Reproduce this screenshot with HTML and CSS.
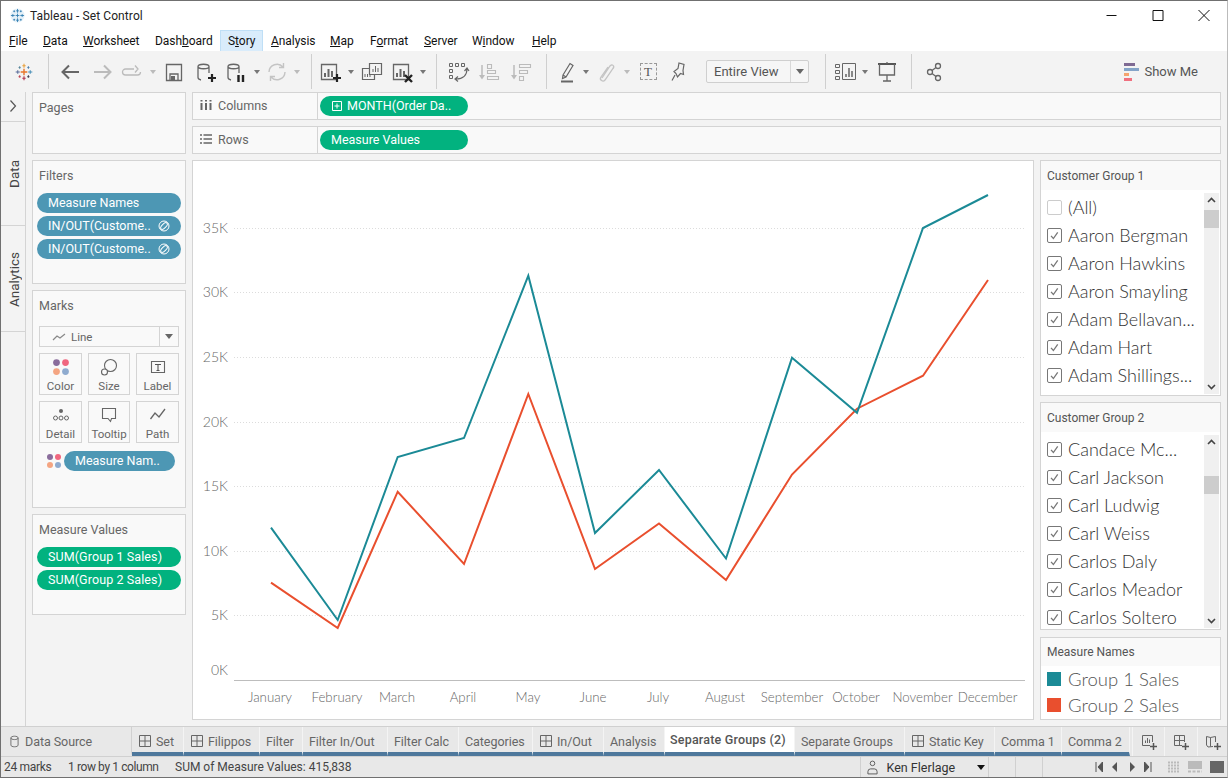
FILE: index.html
```
<!DOCTYPE html>
<html lang="en">
<head>
<meta charset="utf-8">
<title>Tableau - Set Control</title>
<link rel="stylesheet" href="styles.css">
</head>
<body>
<svg class="defs" xmlns="http://www.w3.org/2000/svg">
  <symbol id="sheet" viewBox="0 0 12 12"><path d="M.5.5h11v11H.5zM6 .5v11M.5 6h11" fill="none" stroke="#666"/></symbol>
  <symbol id="check" viewBox="0 0 15 15"><path d="M3.5 8l2.7 3 5-7" fill="none" stroke="#777" stroke-width="1.5"/></symbol>
  <symbol id="setic" viewBox="0 0 12 12"><circle cx="6" cy="6" r="5" fill="none" stroke="#fff"/><ellipse cx="6" cy="6" rx="4.2" ry="2" transform="rotate(-45 6 6)" fill="none" stroke="#fff"/></symbol>
  <symbol id="up" viewBox="0 0 15 15"><path d="M4 9l3.5-3.5L11 9" fill="none" stroke="#444" stroke-width="1.6"/></symbol>
  <symbol id="down" viewBox="0 0 15 15"><path d="M4 6l3.5 3.5L11 6" fill="none" stroke="#444" stroke-width="1.6"/></symbol>
  <symbol id="dots" viewBox="0 0 16 16"><circle cx="4" cy="4" r="3" fill="#8a6d9c"/><circle cx="12" cy="4" r="3" fill="#f0677f"/><circle cx="4" cy="12" r="3" fill="#f4a582"/><circle cx="12" cy="12" r="3" fill="#8fabcf"/></symbol>
  <symbol id="cyl" viewBox="0 0 24 24"><path d="M4 6.500c0-3 11-3 11 0s-11 3-11 0v11c0 1 1 2 3 2.500M15 6.500V13" fill="none" stroke="#666" stroke-width="1.300"/></symbol>
  <symbol id="bars" viewBox="0 0 24 24"><path d="M3.500 4.500h15v15h-15z" fill="none" stroke="#666" stroke-width="1.300"/><path d="M7 17v-4M10.500 17V9M14 17v-6" stroke="#666" stroke-width="2"/></symbol>
</svg>

<div class="window">
  <header class="titlebar">
    <svg class="title-logo" viewBox="0 0 16 16"><circle cx="8" cy="8" r="7.500" fill="#e4f0f8"/><path d="M8 1v4M6.500 3h3M8 6v4M6 8h4M8 11v4M6.500 13h3M1 8h4M3 6.500v3M11 8h4M13 6.500v3M3.500 3.500h2M4.500 2.500v2M10.500 3.500h2M11.500 2.500v2M3.500 12.500h2M4.500 11.500v2M10.500 12.500h2M11.500 11.500v2" stroke="#2d7bb0" stroke-width=".9" fill="none"/></svg>
    <span class="title-text">Tableau - Set Control</span>
    <div class="winctl">
      <svg class="win-ic" viewBox="0 0 44 12"><path d="M17 6.500h10" stroke="#111"/></svg>
      <svg class="win-ic" viewBox="0 0 44 12"><path d="M17.500 1.500h10v10h-10z" fill="none" stroke="#111"/></svg>
      <svg class="win-ic" viewBox="0 0 44 12"><path d="M17 1l11 11M28 1L17 12" fill="none" stroke="#111"/></svg>
    </div>
  </header>

  <nav class="menubar">
    <span class="menu-item"><u>F</u>ile</span>
    <span class="menu-item"><u>D</u>ata</span>
    <span class="menu-item"><u>W</u>orksheet</span>
    <span class="menu-item">Dash<u>b</u>oard</span>
    <span class="menu-item active">S<u>t</u>ory</span>
    <span class="menu-item"><u>A</u>nalysis</span>
    <span class="menu-item"><u>M</u>ap</span>
    <span class="menu-item">F<u>o</u>rmat</span>
    <span class="menu-item"><u>S</u>erver</span>
    <span class="menu-item">W<u>i</u>ndow</span>
    <span class="menu-item"><u>H</u>elp</span>
  </nav>

  <div class="toolbar">
    <span class="tb w48"><svg class="ic logo" viewBox="0 0 24 24" fill="none" stroke-width="1.300"><path d="M12 8v8M8 12h8" stroke="#e8762b" stroke-width="1.700"/><path d="M12 2v5M10 4.500h4" stroke="#e8a03b"/><path d="M12 17v5M10 19.500h4" stroke="#b0304a"/><path d="M2 12h5M4.500 10v4" stroke="#5b6f9c"/><path d="M17 12h5M19.500 10v4" stroke="#4a90b8"/><path d="M5.500 6.500h2.500M6.800 5v3" stroke="#59879b"/><path d="M16 6.500h2.500M17.300 5v3" stroke="#4d7fae"/><path d="M5.500 17.500h2.500M6.800 16v3" stroke="#c04a58"/><path d="M16 17.500h2.500M17.300 16v3" stroke="#445"/></svg></span>
    <span class="tb-div"></span>
    <span class="tb w42"><svg class="ic" viewBox="0 0 24 24"><path d="M21 12H5M11 5.500L4.500 12l6.500 6.500" fill="none" stroke="#666" stroke-width="2"/></svg></span>
    <span class="tb w24"><svg class="ic" viewBox="0 0 24 24"><path d="M3 12h16M13 5.500l6.500 6.500-6.500 6.500" fill="none" stroke="#bbb" stroke-width="2"/></svg></span>
    <span class="tb w34"><svg class="ic" viewBox="0 0 24 24"><path d="M14 9H5.500a3 3 0 0 0 0 6h12a3 3 0 0 0 3-3M15 5.500L18 9l-3 3.500" fill="none" stroke="#bbb" stroke-width="1.300"/></svg></span>
    <span class="tb w8"><i class="tri pale"></i></span>
    <span class="tb w34"><svg class="ic" viewBox="0 0 24 24"><path d="M4.500 4.500h15v16h-15z" fill="none" stroke="#666" stroke-width="1.300"/><path d="M8 20v-6h8v6" fill="none" stroke="#666" stroke-width="1.300"/><path d="M9 16h4v4H9z" fill="#666"/></svg></span>
    <span class="tb w30"><svg class="ic" viewBox="0 0 24 24"><use href="#cyl"/><path d="M18 14v8M14 18h8" stroke="#222" stroke-width="2.200"/></svg></span>
    <span class="tb w30"><svg class="ic" viewBox="0 0 24 24"><use href="#cyl"/><path d="M14.500 15v7M19 15v7" stroke="#222" stroke-width="2.400"/></svg></span>
    <span class="tb w12"><i class="tri"></i></span>
    <span class="tb w28"><svg class="ic" viewBox="0 0 24 24"><path d="M4 12a8 8 0 0 1 14-5M20 12a8 8 0 0 1-14 5M18.500 3v4.500H14M5.500 21v-4.500H10" fill="none" stroke="#c4c4c4" stroke-width="1.400"/></svg></span>
    <span class="tb w12"><i class="tri pale"></i></span>
    <span class="w8"></span>
    <span class="tb-div"></span>
    <span class="tb w35"><svg class="ic" viewBox="0 0 24 24"><use href="#bars"/><path d="M19 14v8M15 18h8" stroke="#222" stroke-width="2.200"/></svg></span>
    <span class="tb w8"><i class="tri"></i></span>
    <span class="tb w34"><svg class="ic" viewBox="0 0 24 24"><path d="M9.500 3.500h12v11h-12z" fill="none" stroke="#666" stroke-width="1.200"/><path d="M13 12V9M15.500 12V6M18 12V8" stroke="#666"/><path d="M9 8.500H2.500v11h12v-5" fill="none" stroke="#666" stroke-width="1.200"/><path d="M5 17v-3M7.500 17v-3M10 17v-2" stroke="#666"/></svg></span>
    <span class="tb w26"><svg class="ic" viewBox="0 0 24 24"><use href="#bars"/><path d="M15 15l7 7M22 15l-7 7" stroke="#222" stroke-width="2.400"/></svg></span>
    <span class="tb w16"><i class="tri"></i></span>
    <span class="w5"></span>
    <span class="tb-div"></span>
    <span class="tb w42"><svg class="ic" viewBox="0 0 24 24"><path d="M3.500 3.500h3v3h-3zM9.500 3.500h3v3h-3zM15.500 3.500h3v3h-3zM3.500 9.500h3v3h-3zM3.500 15.500h3v3h-3z" fill="none" stroke="#666"/><path d="M21 9c0 6-4 10-11 10M18.500 11l2.500-3 2 3M12 16.500L9 19l3 2.500" fill="none" stroke="#666" stroke-width="1.200"/></svg></span>
    <span class="tb w22"><svg class="ic" viewBox="0 0 24 24"><path d="M4 5v13" stroke="#bbb" stroke-width="1.500"/><path d="M1 15h6l-3 4.500z" fill="#bbb"/><path d="M9.500 4.500h4v4h-4zM9.500 10.500h8v3h-8zM9.500 16.500h11v3h-11z" fill="none" stroke="#bbb" stroke-width="1.100"/></svg></span>
    <span class="tb w42"><svg class="ic" viewBox="0 0 24 24"><path d="M4 5v13" stroke="#bbb" stroke-width="1.500"/><path d="M1 15h6l-3 4.500z" fill="#bbb"/><path d="M9.500 4.500h11v3h-11zM9.500 10.500h8v3h-8zM9.500 16.500h4v4h-4z" fill="none" stroke="#bbb" stroke-width="1.100"/></svg></span>
    <span class="w3"></span>
    <span class="tb-div"></span>
    <span class="w5"></span>
    <span class="tb w30"><svg class="ic" viewBox="0 0 24 24"><path d="M8 15L15 3.500l3 2L11 17l-3.500 1.500zM8 15l3 2" fill="none" stroke="#666" stroke-width="1.200"/><path d="M6 21.500h12" stroke="#666" stroke-width="2"/></svg></span>
    <span class="tb w8"><i class="tri"></i></span>
    <span class="tb w30"><svg class="ic" viewBox="0 0 24 24"><path d="M9 18l8-12c2-2.500 5 0 3 2.500L12 20c-2 2.500-6 0-4-3l7-10" fill="none" stroke="#c4c4c4" stroke-width="1.300"/></svg></span>
    <span class="tb w14"><i class="tri pale"></i></span>
    <span class="tb w28"><span class="tbox">T</span></span>
    <span class="tb w32"><svg class="ic" viewBox="0 0 24 24"><path d="M13 3l5 1.500-1 6 .5 4-3-1-3 3.500-1.500-3.500-2-2 4-3zM9 15l-3 5.500" fill="none" stroke="#666" stroke-width="1.200"/></svg></span>
    <span class="w12"></span>
    <span class="fit"><span class="fit-text">Entire View</span><span class="fit-arrow"><i class="tri dark"></i></span></span>
    <span class="w16"></span>
    <span class="tb-div"></span>
    <span class="w9"></span>
    <span class="tb w24"><svg class="ic" viewBox="0 0 24 24"><path d="M.5 4.500h4v3h-4zM.5 10.500h4v3h-4zM.5 16.500h4v3h-4zM7.500 3.500h13v16h-13z" fill="none" stroke="#666"/><path d="M11 17v-3M14 17V8M17 17v-6" stroke="#666" stroke-width="1.500"/></svg></span>
    <span class="w2"></span>
    <span class="tb w8"><i class="tri"></i></span>
    <span class="tb w36"><svg class="ic" viewBox="0 0 24 24"><path d="M3 4h18" stroke="#555" stroke-width="2"/><path d="M4.500 4v11h15V4M12 15v6M8 21h8M12 2v2" fill="none" stroke="#666" stroke-width="1.300"/></svg></span>
    <span class="w6"></span>
    <span class="tb-div"></span>
    <span class="tb w44"><svg class="ic" viewBox="0 0 24 24"><g fill="none" stroke="#666" stroke-width="1.300"><circle cx="8" cy="12" r="2.500"/><circle cx="16" cy="6" r="2.500"/><circle cx="16" cy="18" r="2.500"/><path d="M10 10.500l4-3M10 13.500l4 3"/></g></svg></span>
    <span class="showme">
      <svg class="sm-ic" viewBox="0 0 15 18"><path d="M0 0h11v3H0z" fill="#7f6a93"/><path d="M0 5h15v3H0z" fill="#84a4c8"/><path d="M0 10h5v3H0z" fill="#f4a46f"/><path d="M0 15h8v3H0z" fill="#f0707f"/></svg>
      Show Me
    </span>
  </div>

  <div class="workspace">
    <aside class="rail">
      <div class="rail-top"><svg class="rail-chev" viewBox="0 0 8 14"><path d="M1.500 1.500L6.500 7l-5 5.500" fill="none" stroke="#555" stroke-width="1.200"/></svg></div>
      <div class="rail-tab data"><span>Data</span></div>
      <div class="rail-tab analytics"><span>Analytics</span></div>
    </aside>

    <section class="cards">
      <div class="card pages"><div class="card-title">Pages</div></div>
      <div class="card filters">
        <div class="card-title">Filters</div>
        <div class="pills">
          <div class="pill blue">Measure Names</div>
          <div class="pill blue">IN/OUT(Custome..<svg class="set-ic"><use href="#setic"/></svg></div>
          <div class="pill blue">IN/OUT(Custome..<svg class="set-ic"><use href="#setic"/></svg></div>
        </div>
      </div>
      <div class="card marks">
        <div class="card-title">Marks</div>
        <div class="mark-select">
          <svg class="mark-line" viewBox="0 0 14 8"><path d="M1 7l4-4 3 2 5-4" fill="none" stroke="#888" stroke-width="1.200"/></svg>
          <span class="mark-type">Line</span>
          <span class="mark-arrow"><i class="tri dark"></i></span>
        </div>
        <div class="mark-grid">
          <div class="mark-btn"><svg class="mi dotsic"><use href="#dots"/></svg><span>Color</span></div>
          <div class="mark-btn"><svg class="mi" viewBox="0 0 18 18"><circle cx="10.500" cy="7.500" r="6" fill="none" stroke="#666" stroke-width="1.100"/><circle cx="4.500" cy="14" r="3" fill="#fafafa" stroke="#666" stroke-width="1.100"/></svg><span>Size</span></div>
          <div class="mark-btn"><svg class="mi" viewBox="0 0 18 18"><path d="M2.500 3.500h13v11h-13z" fill="none" stroke="#666" stroke-width="1.100"/><path d="M6 6.500h6M9 6.500v6M7.500 12.500h3" fill="none" stroke="#555" stroke-width="1.100"/></svg><span>Label</span></div>
          <div class="mark-btn"><svg class="mi" viewBox="0 0 18 18"><circle cx="9" cy="5" r="2" fill="#666"/><circle cx="3.500" cy="12" r="2" fill="none" stroke="#666"/><circle cx="9" cy="12" r="2" fill="none" stroke="#666"/><circle cx="14.500" cy="12" r="2" fill="none" stroke="#666"/></svg><span>Detail</span></div>
          <div class="mark-btn"><svg class="mi" viewBox="0 0 18 18"><path d="M2.500 2.500h13v10h-4l-1 3-2.500-3H2.500z" fill="none" stroke="#666" stroke-width="1.100"/></svg><span>Tooltip</span></div>
          <div class="mark-btn"><svg class="mi" viewBox="0 0 18 18"><path d="M1.500 13L6 7l4 4 6-8" fill="none" stroke="#666" stroke-width="1.300"/></svg><span>Path</span></div>
        </div>
        <div class="color-row">
          <svg class="dots-sm"><use href="#dots"/></svg>
          <div class="pill blue short">Measure Nam..</div>
        </div>
      </div>
      <div class="card values">
        <div class="card-title">Measure Values</div>
        <div class="pills">
          <div class="pill green">SUM(Group 1 Sales)</div>
          <div class="pill green">SUM(Group 2 Sales)</div>
        </div>
      </div>
    </section>

    <main class="main">
      <div class="shelf">
        <div class="shelf-label"><svg class="shelf-ic" viewBox="0 0 12 12"><path d="M1.500 4v7M6 4v7M10.500 4v7" stroke="#666" stroke-width="2"/><path d="M1.500 1v1.500M6 1v1.500M10.500 1v1.500" stroke="#666" stroke-width="2"/></svg>Columns</div>
        <div class="pill green shelf-pill"><svg class="plus-ic" viewBox="0 0 10 10"><path d="M.5.500h9v9h-9zM5 2.500v5M2.500 5h5" fill="none" stroke="#fff"/></svg>MONTH(Order Da..</div>
      </div>
      <div class="shelf">
        <div class="shelf-label"><svg class="shelf-ic" viewBox="0 0 12 12"><path d="M0 2h2M3.500 2H12M0 6h2M3.500 6H12M0 10h2M3.500 10H12" stroke="#666" stroke-width="1.600"/></svg>Rows</div>
        <div class="pill green shelf-pill plain">Measure Values</div>
      </div>
      <div class="view-row">
        <div class="chart">
          <svg class="chart-svg" viewBox="193 161 840 558">
            <g class="grid">
              <path d="M234 228.500H1025"/><path d="M234 292.500H1025"/><path d="M234 357.500H1025"/><path d="M234 422.500H1025"/><path d="M234 486.500H1025"/><path d="M234 551.500H1025"/><path d="M234 615.500H1025"/>
            </g>
            <path class="axis" d="M234 680.500H1025"/>
            <g class="ylab">
              <text x="228" y="233">35K</text><text x="228" y="297">30K</text><text x="228" y="362">25K</text><text x="228" y="427">20K</text><text x="228" y="491">15K</text><text x="228" y="556">10K</text><text x="228" y="620">5K</text><text x="228" y="675">0K</text>
            </g>
            <g class="xlab">
              <text x="270" y="702">January</text><text x="337" y="702">February</text><text x="397" y="702">March</text><text x="463" y="702">April</text><text x="528" y="702">May</text><text x="593" y="702">June</text><text x="658" y="702">July</text><text x="725" y="702">August</text><text x="792" y="702">September</text><text x="856" y="702">October</text><text x="922.500" y="702">November</text><text x="987.500" y="702">December</text>
            </g>
            <polyline class="l-red" points="271,582.700 337.700,628 397.700,491.700 464,564 528.300,394 595,569 659,523.500 726,580 792,474.500 857,408.700 923,375.700 988,280"/>
            <polyline class="l-teal" points="271,527.700 337.700,620 397.700,457 464,438 528.300,275.700 595,533 659,470 726,558.500 792,357.800 857,412.800 923,228 988,195"/>
          </svg>
        </div>
        <div class="side">
          <div class="qf qf1">
            <div class="qf-head">Customer Group 1</div>
            <div class="qf-body">
              <div class="qf-rows">
                <div class="qf-row"><span class="cb off"></span>(All)</div>
                <div class="qf-row"><span class="cb"><svg class="ck"><use href="#check"/></svg></span>Aaron Bergman</div>
                <div class="qf-row"><span class="cb"><svg class="ck"><use href="#check"/></svg></span>Aaron Hawkins</div>
                <div class="qf-row"><span class="cb"><svg class="ck"><use href="#check"/></svg></span>Aaron Smayling</div>
                <div class="qf-row"><span class="cb"><svg class="ck"><use href="#check"/></svg></span>Adam Bellavan...</div>
                <div class="qf-row"><span class="cb"><svg class="ck"><use href="#check"/></svg></span>Adam Hart</div>
                <div class="qf-row"><span class="cb"><svg class="ck"><use href="#check"/></svg></span>Adam Shillings...</div>
              </div>
              <div class="sb"><svg class="sb-ar"><use href="#up"/></svg><div class="thumb t1"></div><svg class="sb-ar end"><use href="#down"/></svg></div>
            </div>
          </div>
          <div class="qf qf2">
            <div class="qf-head">Customer Group 2</div>
            <div class="qf-body">
              <div class="qf-rows">
                <div class="qf-row"><span class="cb"><svg class="ck"><use href="#check"/></svg></span>Candace Mc...</div>
                <div class="qf-row"><span class="cb"><svg class="ck"><use href="#check"/></svg></span>Carl Jackson</div>
                <div class="qf-row"><span class="cb"><svg class="ck"><use href="#check"/></svg></span>Carl Ludwig</div>
                <div class="qf-row"><span class="cb"><svg class="ck"><use href="#check"/></svg></span>Carl Weiss</div>
                <div class="qf-row"><span class="cb"><svg class="ck"><use href="#check"/></svg></span>Carlos Daly</div>
                <div class="qf-row"><span class="cb"><svg class="ck"><use href="#check"/></svg></span>Carlos Meador</div>
                <div class="qf-row"><span class="cb"><svg class="ck"><use href="#check"/></svg></span>Carlos Soltero</div>
              </div>
              <div class="sb"><svg class="sb-ar"><use href="#up"/></svg><div class="thumb t2"></div><svg class="sb-ar end"><use href="#down"/></svg></div>
            </div>
          </div>
          <div class="qf qf3">
            <div class="qf-head">Measure Names</div>
            <div class="legend">
              <div class="legend-row"><span class="swatch teal"></span>Group 1 Sales</div>
              <div class="legend-row"><span class="swatch red"></span>Group 2 Sales</div>
            </div>
          </div>
        </div>
      </div>
    </main>
  </div>

  <div class="tabs">
    <div class="tab source"><svg class="tab-cyl" viewBox="0 0 10 14"><path d="M1 3c0-2.500 8-2.500 8 0s-8 2.500-8 0v8c0 2.500 8 2.500 8 0V3" fill="none" stroke="#666"/></svg>Data Source</div>
    <div class="tab sheet"><svg class="tab-ic"><use href="#sheet"/></svg>Set</div>
    <div class="tab sheet"><svg class="tab-ic"><use href="#sheet"/></svg>Filippos</div>
    <div class="tab">Filter</div>
    <div class="tab">Filter In/Out</div>
    <div class="tab">Filter Calc</div>
    <div class="tab">Categories</div>
    <div class="tab sheet"><svg class="tab-ic"><use href="#sheet"/></svg>In/Out</div>
    <div class="tab">Analysis</div>
    <div class="tab current">Separate Groups (2)</div>
    <div class="tab">Separate Groups</div>
    <div class="tab sheet"><svg class="tab-ic"><use href="#sheet"/></svg>Static Key</div>
    <div class="tab">Comma 1</div>
    <div class="tab">Comma 2</div>
    <div class="tab-gap"></div>
    <div class="tab-add"><svg class="add-ic" viewBox="0 0 16 16"><path d="M9 11.500H1.500v-10h10V8" fill="none" stroke="#666"/><path d="M4.500 9V6.500M6.500 9V4M8.500 9V5.500" stroke="#666"/><path d="M12.500 9v7M9 12.500h7" stroke="#555" stroke-width="1.500"/></svg></div>
    <div class="tab-add"><svg class="add-ic" viewBox="0 0 16 16"><path d="M9 11.500H1.500v-10h10V8M1.500 6.500h10M6.500 1.500v10" fill="none" stroke="#666"/><path d="M12.500 9v7M9 12.500h7" stroke="#555" stroke-width="1.500"/></svg></div>
    <div class="tab-add"><svg class="add-ic" viewBox="0 0 16 16"><path d="M8 12.500L3 13l-1.500-2V2.500l4 1 5-1V8M5.500 3.500v9" fill="none" stroke="#666"/><path d="M12.500 9v7M9 12.500h7" stroke="#555" stroke-width="1.500"/></svg></div>
  </div>

  <footer class="status">
    <span class="st-a">24 marks</span>
    <span class="st-b">1 row by 1 column</span>
    <span>SUM of Measure Values: 415,838</span>
    <div class="st-right">
      <div class="user"><svg class="user-ic" viewBox="0 0 12 16"><circle cx="6" cy="3.500" r="2.500" fill="none" stroke="#555"/><path d="M1 15v-2.500A3 3 0 0 1 4 9.500h4a3 3 0 0 1 3 3V15z" fill="none" stroke="#555"/></svg><span class="user-name">Ken Flerlage</span><i class="tri black"></i></div>
      <div class="st-cell"></div>
      <div class="st-cell"></div>
      <div class="st-nav">
        <svg class="nav-ic" viewBox="0 0 8 10"><path d="M1 0v10M7.500 0v10L3 5z" stroke="#555" fill="#555"/></svg>
        <svg class="nav-ic" viewBox="0 0 8 10"><path d="M6 0v10L1 5z" fill="#555"/></svg>
        <svg class="nav-ic" viewBox="0 0 8 10"><path d="M2 0v10l5-5z" fill="#555"/></svg>
        <svg class="nav-ic" viewBox="0 0 8 10"><path d="M7 0v10M.5 0v10L5 5z" stroke="#555" fill="#555"/></svg>
      </div>
      <div class="st-views">
        <svg class="view-ic" viewBox="0 0 12 12"><path d="M0 1.500h12M0 4.500h12M0 7.500h12M0 10.500h12" stroke="#bbb" stroke-width="2" stroke-dasharray="2 1"/></svg>
        <svg class="view-ic wide" viewBox="0 0 14 12"><path d="M0 0h14v8H0z" fill="#bbb"/><path d="M0 10.500h14" stroke="#bbb" stroke-width="2" stroke-dasharray="3 1.500"/></svg>
        <svg class="view-ic wide" viewBox="0 0 14 12"><path d="M0 0h14v12H0z" fill="#666"/></svg>
      </div>
    </div>
  </footer>
</div>
</body>
</html>
```

FILE: styles.css
```
* { box-sizing: border-box; }
html, body { margin: 0; padding: 0; }
body { width: 1228px; height: 778px; overflow: hidden; font-family: Roboto, "Liberation Sans", sans-serif; font-size: 12px; color: #555; background: #f3f3f3; position: relative; }
body::after { content: ""; position: absolute; inset: 0; border: 1px solid #707070; border-right-color: #bbb; pointer-events: none; }
.defs { display: none; }
.window { width: 1228px; height: 778px; display: flex; flex-direction: column; }

/* title */
.titlebar { height: 30px; flex: none; background: #fff; display: flex; align-items: center; padding: 1px 0 0 10px; }
.title-logo { width: 15px; height: 15px; flex: none; }
.title-text { margin-left: 5px; color: #222; font-size: 12px; letter-spacing: .1px; }
.winctl { margin-left: auto; display: flex; margin-right: 2px; }
.win-ic { width: 45px; height: 12px; margin-top: -2px; margin-left: 1px; }
.win-ic:first-child { margin-left: 0; }

/* menu */
.menubar { height: 21px; flex: none; background: #fff; display: grid; grid-template-columns: 34px 40px 72px 73px 43px 59px 40px 54px 48px 60px 50px; padding-left: 1px; }
.menu-item { padding-left: 8px; line-height: 23px; color: #111; font-size: 12px; letter-spacing: -.05px; white-space: nowrap; }
.menu-item.active { background: #d9ecfb; box-shadow: inset 0 0 0 1px #bfdff6; }

/* toolbar */
.toolbar { height: 41px; flex: none; background: #f3f3f3; display: flex; align-items: center; padding-right: 30px; }
.tb { display: flex; align-items: center; justify-content: center; flex: none; height: 26px; }
.tb-div { width: 1px; height: 35px; background: #cfcfcf; flex: none; }
.ic { width: 24px; height: 24px; flex: none; overflow: visible; }
.ic.logo { width: 20px; height: 20px; }
.w2 { width: 2px; flex: none; } .w3 { width: 3px; flex: none; } .w5 { width: 5px; flex: none; } .w6 { width: 6px; flex: none; }
.w8 { width: 8px; flex: none; } .w9 { width: 9px; flex: none; } .w12 { width: 12px; flex: none; } .w14 { width: 14px; flex: none; }
.w16 { width: 16px; flex: none; } .w22 { width: 22px; flex: none; } .w24 { width: 24px; flex: none; } .w26 { width: 26px; flex: none; }
.w28 { width: 28px; flex: none; } .w30 { width: 30px; flex: none; } .w32 { width: 32px; flex: none; } .w34 { width: 34px; flex: none; }
.w35 { width: 35px; flex: none; } .w36 { width: 36px; flex: none; } .w42 { width: 42px; flex: none; } .w44 { width: 44px; flex: none; } .w48 { width: 48px; flex: none; }
.tri { display: block; width: 0; height: 0; flex: none; border-left: 3.5px solid transparent; border-right: 3.5px solid transparent; border-top: 4px solid #777; }
.tri.pale { border-top-color: #bbb; }
.tri.dark { border-left-width: 4px; border-right-width: 4px; border-top: 5px solid #666; }
.tri.black { border-left-width: 4.500px; border-right-width: 4.500px; border-top: 5px solid #111; }
.tbox { width: 17px; height: 17px; border: 1px dashed #999; display: flex; align-items: center; justify-content: center; font-family: "Liberation Serif", serif; font-size: 13px; color: #555; }
.fit { width: 103px; height: 23px; flex: none; border: 1px solid #cfcfcf; border-radius: 2px; display: flex; align-items: center; background: #f6f6f6; }
.fit-text { width: 84px; padding-left: 7px; font-size: 13px; color: #555; border-right: 1px solid #d8d8d8; line-height: 21px; white-space: nowrap; }
.fit-arrow { flex: 1; display: flex; justify-content: center; }
.showme { margin-left: auto; display: flex; align-items: center; font-size: 13px; color: #555; }
.sm-ic { width: 15px; height: 18px; margin-right: 5px; }

/* workspace */
.workspace { flex: none; height: 634px; display: flex; }
.rail { width: 26px; flex: none; border-right: 1px solid #d4d4d4; display: flex; flex-direction: column; background: #f3f3f3; }
.rail-top { height: 30px; display: flex; align-items: center; justify-content: center; border-bottom: 1px solid #d4d4d4; padding-bottom: 1px; }
.rail-chev { width: 8px; height: 14px; }
.rail-tab { display: flex; justify-content: center; align-items: center; border-bottom: 1px solid #d4d4d4; padding-left: 2px; }
.rail-tab span { writing-mode: vertical-rl; transform: rotate(180deg); font-size: 13.500px; color: #444; }
.rail-tab.data { height: 104px; align-items: flex-start; padding-top: 38px; }
.rail-tab.analytics { height: 106px; padding-top: 3px; }

.cards { width: 154px; flex: none; margin-left: 6px; display: flex; flex-direction: column; gap: 6px; }
.card { background: #f9f9f9; border: 1px solid #d4d4d4; }
.card.pages { height: 62px; } .card.filters { height: 124px; } .card.marks { height: 218px; } .card.values { height: 101px; }
.card-title { height: 32px; padding: 7px 0 0 6px; font-size: 12.500px; line-height: 16px; color: #666; }
.pills { display: flex; flex-direction: column; gap: 3px; padding: 0 4px; }
.pill { height: 20px; border-radius: 10px; color: #fff; font-size: 12.500px; line-height: 20px; padding-left: 11px; white-space: nowrap; display: flex; align-items: center; }
.pill.blue { background: #4d97b4; }
.pill.green { background: #02b27f; }
.values .pill { letter-spacing: .1px; }
.set-ic { width: 12px; height: 12px; margin-left: auto; margin-right: 11px; flex: none; }

.mark-select { margin: 3px 6px 0; height: 21px; border: 1px solid #d4d4d4; display: flex; align-items: center; background: #f9f9f9; }
.mark-line { width: 14px; height: 8px; margin-left: 12px; }
.mark-type { margin-left: 5px; font-size: 11.500px; color: #666; }
.mark-arrow { margin-left: auto; width: 19px; height: 19px; border-left: 1px solid #d4d4d4; display: flex; align-items: center; justify-content: center; }
.mark-grid { margin: 6px 6px 0; display: grid; grid-template-columns: 43px 42px 43px; column-gap: 6px; row-gap: 6px; }
.mark-btn { height: 42px; border: 1px solid #d4d4d4; display: flex; flex-direction: column; align-items: center; padding-top: 4px; font-size: 11.500px; color: #666; }
.mark-btn span { margin-top: 3px; line-height: 14px; }
.mi { width: 18px; height: 18px; flex: none; }
.color-row { display: flex; align-items: center; margin: 8px 0 0 13px; }
.dots-sm { width: 16px; height: 16px; flex: none; }
.pill.short { width: 111px; margin-left: 2px; }

.main { width: 1029px; flex: none; margin-left: 6px; display: flex; flex-direction: column; gap: 6px; }
.shelf { height: 28px; flex: none; background: #f9f9f9; border: 1px solid #d4d4d4; display: flex; align-items: center; }
.shelf-label { width: 125px; height: 26px; border-right: 1px solid #d4d4d4; display: flex; align-items: center; padding: 0 0 2px 7px; font-size: 12.500px; color: #666; }
.shelf-ic { width: 12px; height: 12px; margin-right: 6px; flex: none; }
.shelf-pill { width: 148px; margin-left: 2px; padding-left: 12px; }
.shelf-pill.plain { padding-left: 11px; }
.plus-ic { width: 10px; height: 10px; margin-right: 5px; flex: none; }

.view-row { display: flex; gap: 6px; }
.chart { width: 842px; height: 560px; background: #fff; border: 1px solid #d4d4d4; }
.chart-svg { display: block; width: 840px; height: 558px; font-family: Lato, "Open Sans", sans-serif; font-weight: 300; }
.grid path { stroke: #dcdcdc; stroke-width: 1; stroke-dasharray: 1 2; fill: none; }
.axis { stroke: #bdbdbd; stroke-width: 1; fill: none; }
.ylab text { text-anchor: end; font-size: 14px; fill: #666; }
.xlab text { text-anchor: middle; font-size: 13.300px; fill: #666; }
.l-teal, .l-red { fill: none; stroke-width: 2; stroke-linejoin: miter; }
.l-teal { stroke: #1b8a96; }
.l-red { stroke: #e94f2e; }

.side { width: 181px; flex: none; display: flex; flex-direction: column; }
.qf { border: 1px solid #d4d4d4; background: #fff; flex: none; overflow: hidden; }
.qf1 { height: 236px; }
.qf2 { height: 228px; margin-top: 6px; }
.qf3 { height: 83px; margin-top: 7px; }
.qf-head { height: 29px; background: #f9f9f9; padding: 7px 0 0 6px; font-size: 12px; line-height: 16px; color: #555; }
.qf3 .qf-head { height: 28px; padding-top: 6px; }
.qf-body { display: flex; height: calc(100% - 29px); padding: 3px 1px 1px 0; }
.qf-rows { flex: 1; overflow: hidden; }
.qf-row { height: 28px; display: flex; align-items: center; padding-left: 6px; font-family: Lato, "Open Sans", sans-serif; font-weight: 300; font-size: 18px; color: #333; white-space: nowrap; }
.cb { width: 15px; height: 15px; flex: none; border: 1px solid #777; border-radius: 2px; margin-right: 6px; background: #fff; }
.cb.off { border-color: #ccc; }
.ck { display: block; width: 13px; height: 13px; }
.sb { width: 15px; flex: none; background: #f0f0f0; display: flex; flex-direction: column; }
.sb-ar { width: 15px; height: 15px; flex: none; }
.sb-ar.end { margin-top: auto; }
.thumb { height: 18px; background: #cdcdcd; flex: none; }
.thumb.t1 { margin-top: 2px; }
.thumb.t2 { margin-top: 26px; }
.legend-row { height: 26px; display: flex; align-items: center; padding-left: 6px; font-family: Lato, "Open Sans", sans-serif; font-weight: 300; font-size: 18.500px; color: #555; }
.swatch { width: 14px; height: 14px; margin-right: 7px; flex: none; }
.swatch.teal { background: #1b8a96; } .swatch.red { background: #e94f2e; }

/* tabs */
.tabs { height: 30px; flex: none; background: #e8e8e8; border-top: 1px solid #d0d0d0; display: grid; grid-template-columns: 132px 52px 76px 43px 85px 71px 74px 71px 61px 130px 110px 90px 67px 68px 2px 32px 33px 31px; }
.tab { border-right: 1px solid #f4f4f4; border-bottom: 4px solid #4e789c; display: flex; align-items: center; padding-left: 6px; font-size: 12.500px; color: #666; white-space: nowrap; padding-top: 3px; letter-spacing: -.05px; }
.tab.sheet { padding-left: 7px; }
.tab.source { border-bottom-color: transparent; padding-left: 10px; border-right-color: #d0d0d0; }
.tab.current { background: #fff; font-weight: 500; color: #555; padding-left: 5px; padding-top: 0; letter-spacing: .2px; }
.tab-cyl { width: 9px; height: 13px; margin-right: 6px; flex: none; }
.tab-ic { width: 12px; height: 12px; margin-right: 5px; flex: none; }
.tab-add { border-left: 1px solid #f4f4f4; display: flex; align-items: center; justify-content: center; }
.add-ic { width: 16px; height: 16px; flex: none; }

/* status */
.status { height: 22px; flex: none; background: #e8e8e8; border-top: 1px solid #d0d0d0; display: flex; align-items: center; font-size: 12px; color: #444; padding: 0 0 1px 4px; }
.st-a { width: 64px; letter-spacing: -.3px; } .st-b { width: 107px; letter-spacing: -.4px; }
.st-right { margin-left: auto; display: flex; align-items: center; height: 100%; }
.user { width: 128px; height: 100%; border-left: 1px solid #d0d0d0; display: flex; align-items: center; padding-left: 6px; color: #333; font-size: 12.500px; }
.user-ic { width: 11px; height: 15px; flex: none; margin-right: 9px; }
.user-name { width: 90px; }
.st-cell { width: 27px; height: 100%; border-left: 1px solid #d0d0d0; }
.st-nav { height: 100%; border-left: 1px solid #d0d0d0; padding-left: 52px; display: flex; align-items: center; gap: 8.500px; }
.nav-ic { width: 8px; height: 10px; flex: none; }
.st-views { display: flex; align-items: center; gap: 8px; margin-left: 16px; margin-right: 4px; }
.view-ic { width: 12px; height: 12px; flex: none; }
.view-ic.wide { width: 14px; }
```
